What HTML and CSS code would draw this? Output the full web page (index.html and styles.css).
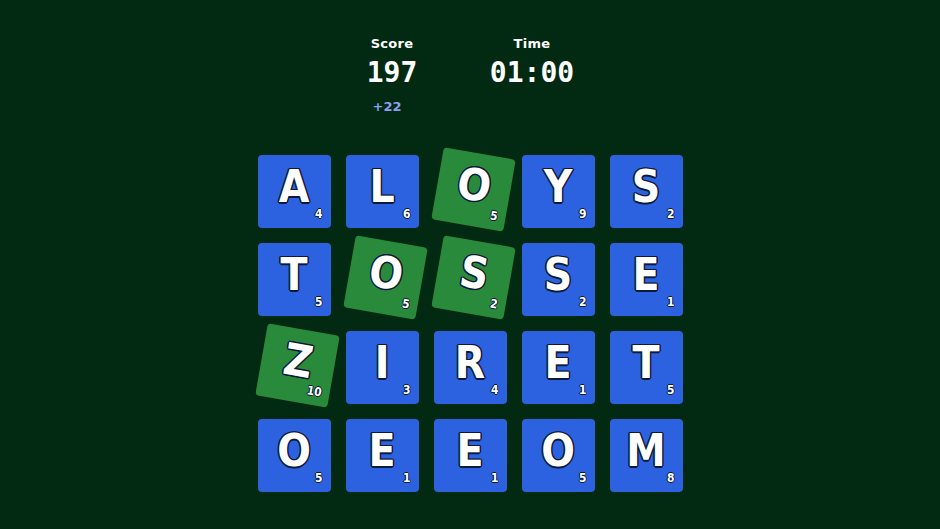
FILE: index.html
```html
<!DOCTYPE html>
<html>
<head>
<meta charset="utf-8">
<link rel="stylesheet" href="styles.css">
</head>
<body>
<div class="page">
  <header class="hud">
    <div class="stat">
      <div class="label">Score</div>
      <div class="value">197</div>
      <div class="bonus">+22</div>
    </div>
    <div class="stat">
      <div class="label">Time</div>
      <div class="value">01:00</div>
      <div class="bonus empty">&nbsp;</div>
    </div>
  </header>
  <main class="board">
    <div class="tile"><span class="ch">A</span><span class="pts">4</span></div>
    <div class="tile"><span class="ch">L</span><span class="pts">6</span></div>
    <div class="tile sel"><span class="ch">O</span><span class="pts">5</span></div>
    <div class="tile"><span class="ch">Y</span><span class="pts">9</span></div>
    <div class="tile"><span class="ch">S</span><span class="pts">2</span></div>

    <div class="tile"><span class="ch">T</span><span class="pts">5</span></div>
    <div class="tile sel"><span class="ch">O</span><span class="pts">5</span></div>
    <div class="tile sel"><span class="ch">S</span><span class="pts">2</span></div>
    <div class="tile"><span class="ch">S</span><span class="pts">2</span></div>
    <div class="tile"><span class="ch">E</span><span class="pts">1</span></div>

    <div class="tile sel"><span class="ch">Z</span><span class="pts">10</span></div>
    <div class="tile"><span class="ch">I</span><span class="pts">3</span></div>
    <div class="tile"><span class="ch">R</span><span class="pts">4</span></div>
    <div class="tile"><span class="ch">E</span><span class="pts">1</span></div>
    <div class="tile"><span class="ch">T</span><span class="pts">5</span></div>

    <div class="tile"><span class="ch">O</span><span class="pts">5</span></div>
    <div class="tile"><span class="ch">E</span><span class="pts">1</span></div>
    <div class="tile"><span class="ch">E</span><span class="pts">1</span></div>
    <div class="tile"><span class="ch">O</span><span class="pts">5</span></div>
    <div class="tile"><span class="ch">M</span><span class="pts">8</span></div>
  </main>
</div>
</body>
</html>
```

FILE: styles.css
```css
html, body {
  margin: 0;
  padding: 0;
  background: #022912;
  width: 940px;
  height: 529px;
  overflow: hidden;
}
.page {
  display: flex;
  flex-direction: column;
  align-items: center;
  color: #fff;
  font-family: "DejaVu Sans", sans-serif;
}
.hud {
  display: flex;
  justify-content: center;
  gap: 40px;
  padding-top: 35px;
  padding-right: 16px;
  height: 85px;
}
.stat {
  width: 100px;
  display: flex;
  flex-direction: column;
  align-items: center;
}
.label {
  font-size: 13px;
  font-weight: bold;
  line-height: 18px;
  letter-spacing: 0.3px;
}
.value {
  font-family: "DejaVu Sans Mono", monospace;
  font-weight: bold;
  font-size: 28px;
  line-height: 32px;
  margin-top: 4px;
}
.bonus {
  font-size: 13px;
  font-weight: bold;
  color: #8d9ef0;
  line-height: 16px;
  margin-top: 10px;
  margin-right: 10px;
}
.board {
  margin-top: 35px;
  display: grid;
  grid-template-columns: repeat(5, 73px);
  grid-auto-rows: 73px;
  gap: 15px;
}
.tile {
  position: relative;
  background: #2c62df;
  border-radius: 4px;
  display: flex;
  justify-content: center;
  align-items: flex-start;
}
.tile.sel {
  background: #2a8a3b;
  transform: translate(3px, -2px) rotate(10deg);
}
.ch {
  font-family: "DejaVu Sans Condensed", "DejaVu Sans", sans-serif;
  font-weight: bold;
  font-size: 44px;
  line-height: 46px;
  margin-top: 9px;
  color: #fff;
  text-shadow:
    1.5px 0 0 #0b1a36, -1.5px 0 0 #0b1a36, 0 1.5px 0 #0b1a36, 0 -1.5px 0 #0b1a36,
    1px 1px 0 #0b1a36, -1px 1px 0 #0b1a36, 1px -1px 0 #0b1a36, -1px -1px 0 #0b1a36;
}
.pts {
  position: absolute;
  right: 8px;
  bottom: 8px;
  font-family: "DejaVu Sans Condensed", "DejaVu Sans", sans-serif;
  font-weight: bold;
  font-size: 12px;
  line-height: 12px;
  color: #fff;
  text-shadow: 1px 0 0 #0b1a36, -1px 0 0 #0b1a36, 0 1px 0 #0b1a36, 0 -1px 0 #0b1a36;
}
```
